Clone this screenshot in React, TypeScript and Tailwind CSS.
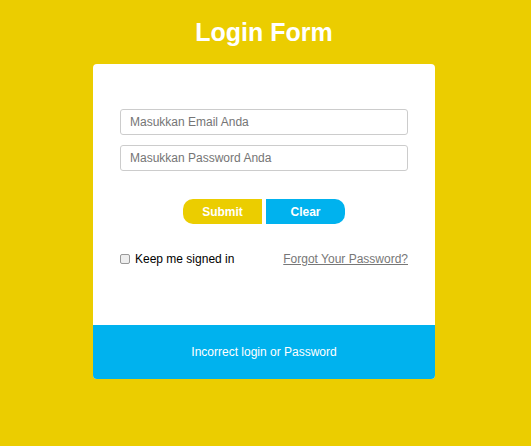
export default function App() {
  return (
    <div className="w-[531px] h-[446px] bg-[#ebcd00] pl-[93px] font-['Liberation_Sans',Arial,sans-serif]">
      <div className="w-[342px] flex flex-col items-center">
        <h1 className="mt-[17px] text-[25px] leading-[30px] font-bold text-white">Login Form</h1>
        <div className="mt-[17px] w-[342px] h-[315px] bg-white rounded-[4px] overflow-hidden flex flex-col">
          <div className="flex-1 px-[27px] pt-[45px]">
            <div className="h-[26px] border border-[#cccccc] rounded-[3px] px-[9px] flex items-center text-[12px] text-[#757575]">
              Masukkan Email Anda
            </div>
            <div className="mt-[10px] h-[26px] border border-[#cccccc] rounded-[3px] px-[9px] flex items-center text-[12px] text-[#757575]">
              Masukkan Password Anda
            </div>
            <div className="mt-[28px] flex justify-center gap-[4px]">
              <button className="w-[79px] h-[25px] bg-[#ebcd00] text-white text-[12px] font-bold rounded-l-[10px]">Submit</button>
              <button className="w-[79px] h-[25px] bg-[#00b2ee] text-white text-[12px] font-bold rounded-r-[10px]">Clear</button>
            </div>
            <div className="mt-[26px] flex items-center justify-between text-[12px]">
              <label className="flex items-center gap-[5px] text-black">
                <span className="w-[10px] h-[10px] border border-[#999] rounded-[2px] bg-[#eee] inline-block" />
                Keep me signed in
              </label>
              <span className="text-[#777] underline">Forgot Your Password?</span>
            </div>
          </div>
          <div className="h-[54px] bg-[#00b2ee] flex items-center justify-center text-white text-[12px]">
            Incorrect login or Password
          </div>
        </div>
      </div>
    </div>
  );
}
